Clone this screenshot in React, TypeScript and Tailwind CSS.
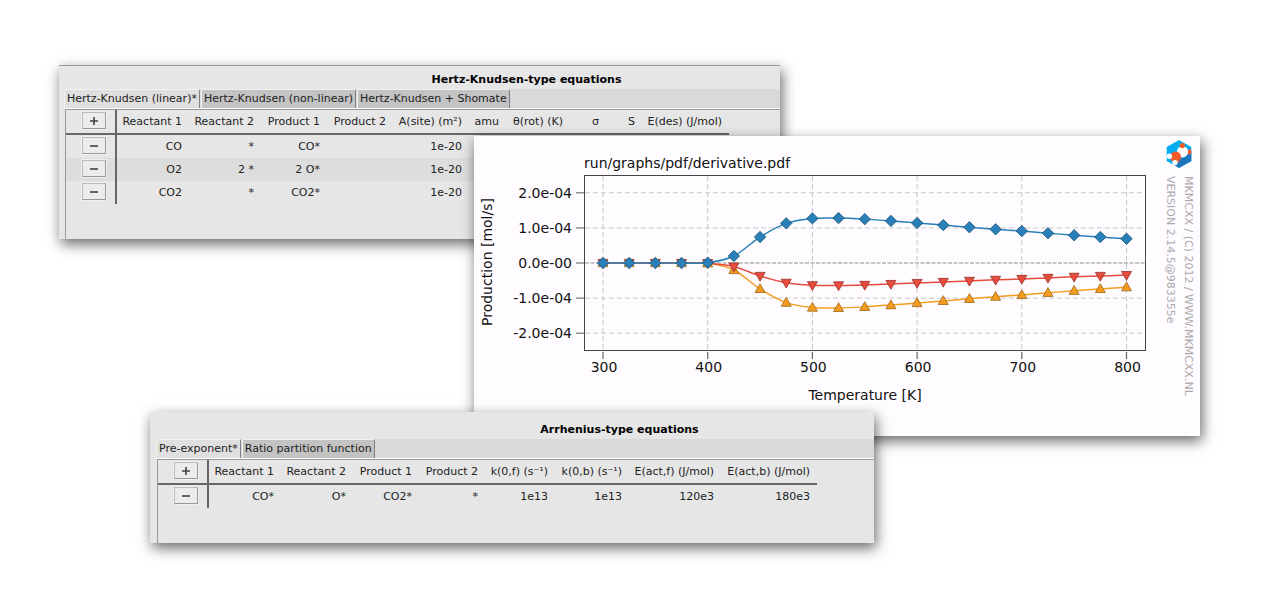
import type { ReactNode } from "react";

type Column = { label: string; width: string };

type EquationWindowProps = {
  title: string;
  tabs: string[];
  columns: Column[];
  rows: string[][];
  activeTab: string;
  className: string;
  titleClass: string;
  tableClass: string;
};

function SquareButton({ label, children }: { label: string; children: ReactNode }) {
  return (
    <button
      type="button"
      aria-label={label}
      className="mr-[9px] mb-0.5 flex h-[17px] w-6 items-center justify-center border border-[#999] border-t-[#bbb] border-l-[#bbb] bg-[#ececec] shadow-[0_0_0_1px_#f0f0f0]"
    >
      <svg width="8" height="8" viewBox="0 0 8 8" stroke="#444" strokeWidth="1.6">
        {children}
      </svg>
    </button>
  );
}

function EquationWindow({
  title,
  tabs,
  columns,
  rows,
  activeTab,
  className,
  titleClass,
  tableClass,
}: EquationWindowProps) {
  return (
    <section
      className={`absolute flex flex-col overflow-hidden bg-[#e6e6e6] text-[11px] leading-4 text-[#222] shadow-[2px_5px_13px_rgba(0,0,0,0.6)] ${className}`}
    >
      <h2 className={`pl-[214px] text-center font-bold text-black ${titleClass}`}>{title}</h2>
      <div role="tablist" className="ml-[5px] flex h-5 shrink-0 gap-px border-b border-white bg-[#d9d9d9]">
        {tabs.map((tab) => (
          <button
            key={tab}
            type="button"
            role="tab"
            aria-selected={tab === activeTab}
            className={`rounded-t-xs border-t border-r border-l border-t-[#f2f2f2] border-l-[#f2f2f2] border-r-[#808080] px-0.5 whitespace-nowrap ${
              tab === activeTab ? "bg-[#dfdfdf]" : "bg-[#c3c3c3]"
            }`}
          >
            {tab}
          </button>
        ))}
      </div>
      <div className="ml-1.5 grow border-t border-l border-[#999]">
        <table className={`table-fixed border-separate border-spacing-0 text-right ${tableClass}`}>
          <colgroup>
            <col className="w-[51px]" />
            {columns.map((c) => (
              <col key={c.label} className={c.width} />
            ))}
          </colgroup>
          <thead>
            <tr className="h-[25px]">
              <th className="border-r-2 border-b-2 border-[#666] p-0">
                <div className="flex justify-end">
                  <SquareButton label="Add equation">
                    <path d="M0 4H8M4 0V8" />
                  </SquareButton>
                </div>
              </th>
              {columns.map((c) => (
                <th
                  key={c.label}
                  className="border-b-2 border-[#666] py-0 pr-[7px] pl-0 text-right font-normal whitespace-nowrap"
                >
                  {c.label}
                </th>
              ))}
            </tr>
          </thead>
          <tbody>
            {rows.map((row, i) => (
              <tr key={i} className="h-[23px] even:bg-[#dddddd]">
                <td className="border-r-2 border-[#666] p-0">
                  <div className="flex justify-end">
                    <SquareButton label="Remove equation">
                      <path d="M0 4H8" />
                    </SquareButton>
                  </div>
                </td>
                {columns.map((c, j) => (
                  <td key={c.label} className="py-0 pr-[7px] pl-0 whitespace-nowrap">
                    {row[j]}
                  </td>
                ))}
              </tr>
            ))}
          </tbody>
        </table>
      </div>
    </section>
  );
}

const hertzColumns: Column[] = [
  { label: "Reactant 1", width: "w-[72px]" },
  { label: "Reactant 2", width: "w-[72px]" },
  { label: "Product 1", width: "w-[66px]" },
  { label: "Product 2", width: "w-[66px]" },
  { label: "A(site) (m²)", width: "w-[76px]" },
  { label: "amu", width: "w-[37px]" },
  { label: "θ(rot) (K)", width: "w-[64px]" },
  { label: "σ", width: "w-[36px]" },
  { label: "S", width: "w-[36px]" },
  { label: "E(des) (J/mol)", width: "w-[87px]" },
];

const arrheniusColumns: Column[] = [
  { label: "Reactant 1", width: "w-[72px]" },
  { label: "Reactant 2", width: "w-[72px]" },
  { label: "Product 1", width: "w-[66px]" },
  { label: "Product 2", width: "w-[66px]" },
  { label: "k(0,f) (s⁻¹)", width: "w-[70px]" },
  { label: "k(0,b) (s⁻¹)", width: "w-[74px]" },
  { label: "E(act,f) (J/mol)", width: "w-[92px]" },
  { label: "E(act,b) (J/mol)", width: "w-[96px]" },
];

// CO2 production in units of 1e-4 mol/s, one value every 25 K from 300 K.
const production = [
  0, 0, 0, 0, 0.01, 0.2, 0.74, 1.13, 1.27, 1.28, 1.25, 1.2, 1.14, 1.08, 1.02, 0.96, 0.91, 0.85, 0.79, 0.74, 0.69,
];

const xOf = (kelvin: number) => 129 + (kelvin - 300) * 1.047;
const yOf = (value: number) => 127 - value * 35.1;

function toPoints(scale: number): [number, number][] {
  return production.map((v, i) => [xOf(300 + i * 25), yOf(v * scale)]);
}

function smoothPath(p: [number, number][]) {
  let d = `M${p[0][0]} ${p[0][1]}`;
  for (let i = 0; i < p.length - 1; i++) {
    const a = p[Math.max(i - 1, 0)];
    const b = p[i];
    const c = p[i + 1];
    const e = p[Math.min(i + 2, p.length - 1)];
    d += `C${b[0] + (c[0] - a[0]) / 6} ${b[1] + (c[1] - a[1]) / 6} ${c[0] - (e[0] - b[0]) / 6} ${c[1] - (e[1] - b[1]) / 6} ${c[0]} ${c[1]}`;
  }
  return d;
}

const series = [
  { name: "CO", scale: -1, fill: "#f39c1f", edge: "#9c6412", marker: "M0 -5.2L5 3.6H-5Z" },
  { name: "O2", scale: -0.5, fill: "#e74c3c", edge: "#96302a", marker: "M0 5.2L5 -3.6H-5Z" },
  { name: "CO2", scale: 1, fill: "#2980b9", edge: "#1a5276", marker: "M0 -5.7L5.7 0L0 5.7L-5.7 0Z" },
];

function Chart() {
  return (
    <svg
      viewBox="0 0 683 300"
      className="w-[683px] shrink-0 text-[14px]"
      fill="#111"
      role="img"
      aria-label="Production against temperature"
    >
      <text x="110" y="32">run/graphs/pdf/derivative.pdf</text>
      <g stroke="#c9c7cb" strokeDasharray="5 3">
        {[300, 400, 500, 600, 700, 800].map((t) => (
          <path key={t} d={`M${xOf(t)} 40V214`} />
        ))}
        {[2, 1, -1, -2].map((v) => (
          <path key={v} d={`M111 ${yOf(v)}H671`} />
        ))}
      </g>
      <path d="M111 127H671" stroke="#b5b3b7" strokeWidth="1.4" strokeDasharray="4 1.5" />
      <rect x="110.5" y="39.5" width="561" height="175" fill="none" stroke="#444" />
      {[2, 1, 0, -1, -2].map((v) => (
        <g key={v}>
          <path d={`M102 ${yOf(v)}H110`} stroke="#777" strokeWidth="1.2" />
          <text x="98" y={yOf(v) + 5} textAnchor="end">{v === 0 ? "0.0e-00" : `${v}.0e-04`}</text>
        </g>
      ))}
      {[300, 400, 500, 600, 700, 800].map((t) => (
        <g key={t}>
          <path d={`M${xOf(t)} 216V223`} stroke="#666" strokeWidth="1.2" />
          <text x={xOf(t) + 1} y="236" textAnchor="middle">{t}</text>
        </g>
      ))}
      <text x="391" y="264" textAnchor="middle">Temperature [K]</text>
      <text transform="translate(18 126) rotate(-90)" textAnchor="middle">Production [mol/s]</text>
      {series.map((s) => {
        const points = toPoints(s.scale);
        return (
          <g key={s.name}>
            <path d={smoothPath(points)} fill="none" stroke={s.fill} strokeWidth="1.5" />
            {points.map(([x, y]) => (
              <path key={x} d={s.marker} transform={`translate(${x} ${y})`} fill={s.fill} stroke={s.edge} strokeWidth="0.8" />
            ))}
          </g>
        );
      })}
    </svg>
  );
}

function Logo() {
  return (
    <svg width="26" height="28" viewBox="0 0 26 28" aria-hidden="true">
      <clipPath id="hexagon">
        <path d="M13 0L25.3 7V21L13 28L.7 21V7Z" />
      </clipPath>
      <g clipPath="url(#hexagon)">
        <path d="M0 0H26V28H0Z" fill="#00aeef" />
        <path d="M26 11L7 24L13 28H26Z" fill="#1c75bc" />
        <circle cx="23.5" cy="11.8" r="2.6" fill="#f15a29" />
        <circle cx="16.5" cy="11.8" r="5.6" fill="#fff" />
        <circle cx="16.3" cy="5.6" r="2.6" fill="#f15a29" />
        <circle cx="9.5" cy="17" r="5.5" fill="#f15a29" />
      </g>
      <circle cx="3.4" cy="16.2" r="2.7" fill="#fff" />
      <circle cx="9" cy="22.6" r="2.7" fill="#fff" />
    </svg>
  );
}

export default function App() {
  return (
    <main className="relative min-h-screen overflow-hidden bg-white font-['DejaVu_Sans',sans-serif]">
      <EquationWindow
        title="Hertz-Knudsen-type equations"
        tabs={["Hertz-Knudsen (linear)*", "Hertz-Knudsen (non-linear)", "Hertz-Knudsen + Shomate"]}
        activeTab="Hertz-Knudsen (linear)*"
        columns={hertzColumns}
        rows={[
          ["CO", "*", "CO*", "", "1e-20"],
          ["O2", "2 *", "2 O*", "", "1e-20"],
          ["CO2", "*", "CO2*", "", "1e-20"],
        ]}
        className="top-[65px] left-[59px] h-[174px] w-[721px] border-t border-[#999]"
        titleClass="pt-1.5 pb-px"
        tableClass="w-[663px]"
      />
      <section className="absolute top-[136px] left-[474px] flex w-[726px] bg-[#fefcff] shadow-[2px_5px_13px_rgba(0,0,0,0.6)]">
        <Chart />
        <div className="flex grow flex-col items-center pt-1">
          <Logo />
          <p className="mt-2 text-[11px] leading-[18px] whitespace-nowrap text-[#aaa] [writing-mode:vertical-rl]">
            MKMCXX / (C) 2012 / WWW.MKMCXX.NL
            <br />
            VERSION 2.14.5@983355e
          </p>
        </div>
      </section>
      <EquationWindow
        title="Arrhenius-type equations"
        tabs={["Pre-exponent*", "Ratio partition function"]}
        activeTab="Pre-exponent*"
        columns={arrheniusColumns}
        rows={[["CO*", "O*", "CO2*", "*", "1e13", "1e13", "120e3", "180e3"]]}
        className="top-[412px] left-[150px] h-[131px] w-[724px] pl-px"
        titleClass="pt-2.5 pb-px"
        tableClass="w-[659px]"
      />
    </main>
  );
}
